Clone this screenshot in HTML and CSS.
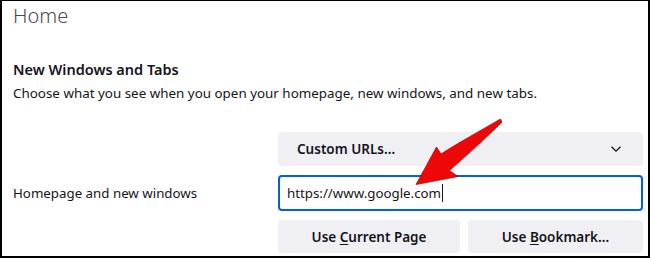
FILE: index.html
```html
<!DOCTYPE html>
<html lang="en">
<head>
<meta charset="utf-8">
<title>Home</title>
<link rel="stylesheet" href="styles.css">
</head>
<body>
<div class="frame">
  <h1 class="title">Home</h1>
  <h2 class="section">New Windows and Tabs</h2>
  <p class="desc">Choose what you see when you open your homepage, new windows, and new tabs.</p>
  <div class="grid">
    <div class="cell"></div>
    <div class="select">
      <span>Custom URLs…</span>
      <svg class="chev" width="12" height="8" viewBox="0 0 12 8"><path d="M1.5 1.8 L6 6.2 L10.5 1.8" fill="none" stroke="#15141a" stroke-width="1.3"/></svg>
    </div>
    <div class="label">Homepage and new windows</div>
    <div class="input"><span>https://www.google.com</span><span class="caret"></span></div>
    <div class="cell"></div>
    <div class="buttons">
      <div class="btn"><span>Use <u>C</u>urrent Page</span></div>
      <div class="btn"><span>Use <u>B</u>ookmark…</span></div>
    </div>
  </div>
  <svg class="arrow" width="650" height="258" viewBox="0 0 650 258">
    <path d="M500.5 119 C480 131 458 143 441 154 L436.5 147 L416 184.5 L458 176.5 L449.5 170.5 C468 154 486 138 502 122 Z" fill="#ee0707" stroke="#c80000" stroke-width="0.8" stroke-linejoin="round"/>
  </svg>
</div>
</body>
</html>
```
FILE: styles.css
```css
html, body {
  margin: 0;
  padding: 0;
  background: #fff;
}
.frame {
  position: relative;
  box-sizing: border-box;
  width: 650px;
  height: 258px;
  border: 2px solid #000;
  border-top-width: 1px;
  padding: 0 0 0 11px;
  font-family: "Noto Sans", "Open Sans", sans-serif;
  color: #15141a;
  overflow: hidden;
}
.title {
  margin: 0;
  padding-top: 2px;
  font-size: 20px;
  line-height: 26px;
  font-weight: 300;
  color: #4a4a4a;
}
.section {
  margin: 30px 0 0 0;
  font-size: 14.5px;
  line-height: 20px;
  font-weight: 600;
}
.desc {
  margin: 4px 0 0 0;
  font-size: 13.4px;
  line-height: 20px;
}
.grid {
  display: grid;
  grid-template-columns: 265px 365px;
  row-gap: 9px;
  margin-top: 29px;
}
.select {
  height: 34px;
  background: #f0f0f4;
  border-radius: 4px;
  display: flex;
  align-items: center;
  justify-content: space-between;
  padding: 0 21px 0 19px;
  font-size: 13.5px;
  font-weight: 600;
}
.label {
  font-size: 13.3px;
  line-height: 20px;
  align-self: center;
}
.input {
  box-sizing: border-box;
  height: 36px;
  border: 2px solid #0061e0;
  border-radius: 4px;
  display: flex;
  align-items: center;
  padding-left: 7px;
  font-size: 13.3px;
}
.caret {
  display: inline-block;
  width: 1px;
  height: 18px;
  background: #15141a;
  margin-left: 1px;
}
.buttons {
  display: flex;
  gap: 8px;
}
.btn {
  height: 33px;
  background: #f0f0f4;
  border-radius: 4px;
  display: flex;
  align-items: center;
  justify-content: center;
  font-size: 13.5px;
  font-weight: 600;
}
.btn:first-child { width: 182px; }
.btn:last-child { flex: 1; }
.btn u { text-underline-offset: 2px; }
.arrow {
  position: absolute;
  left: -2px;
  top: -1px;
}
```
